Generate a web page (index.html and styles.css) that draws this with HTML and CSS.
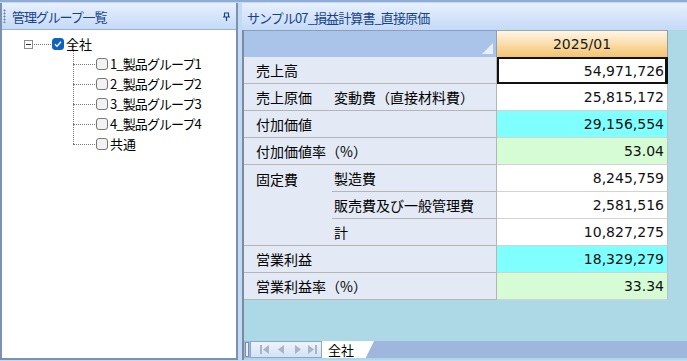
FILE: index.html
```html
<!DOCTYPE html>
<html lang="ja">
<head>
<meta charset="utf-8">
<link rel="stylesheet" href="styles.css">
</head>
<body>
<div class="app">
  <div class="left">
    <div class="ptitle">
      <span class="grip"></span>
      <span class="ttext">管理グループ一覧</span>
      <svg class="pin" width="9" height="9" viewBox="0 0 9 9"><path d="M2 1h5M2.5 1v4M6.5 1v4M1 5h7M4.5 5v4" stroke="#15428b" stroke-width="1.2" fill="none"/></svg>
    </div>
    <div class="tree">
      <div class="node root">
        <span class="expander"><svg width="9" height="9" viewBox="0 0 9 9"><rect x="0.5" y="0.5" width="8" height="8" fill="#fff" stroke="#8c8c8c"/><path d="M2 4.5h5" stroke="#333"/></svg></span>
        <span class="hdots"></span>
        <span class="cb checked"><svg width="10" height="10" viewBox="0 0 10 10"><path d="M2 5.2l2 2 4-4.4" stroke="#fff" stroke-width="1.3" fill="none"/></svg></span>
        <span class="label">全社</span>
      </div>
      <div class="children">
        <div class="node child"><span class="hline"></span><span class="cb"></span><span class="label tight">1_製品グループ1</span></div>
        <div class="node child"><span class="hline"></span><span class="cb"></span><span class="label tight">2_製品グループ2</span></div>
        <div class="node child"><span class="hline"></span><span class="cb"></span><span class="label tight">3_製品グループ3</span></div>
        <div class="node child"><span class="hline"></span><span class="cb"></span><span class="label tight">4_製品グループ4</span></div>
        <div class="node child last"><span class="hline"></span><span class="cb"></span><span class="label">共通</span></div>
      </div>
    </div>
  </div>
  <div class="right">
    <div class="rtitle">サンプル07_損益計算書_直接原価</div>
    <div class="sheet">
      <div class="gridarea">
        <div class="grid">
          <div class="corner"><span class="tri"></span></div>
          <div class="colhead">2025/01</div>

          <div class="lab c1 span2">売上高</div>
          <div class="val sel">54,971,726</div>

          <div class="lab c1">売上原価</div>
          <div class="lab c2">変動費（直接材料費）</div>
          <div class="val">25,815,172</div>

          <div class="lab c1 span2">付加価値</div>
          <div class="val cyan">29,156,554</div>

          <div class="lab c1 span2">付加価値率（%）</div>
          <div class="val green">53.04</div>

          <div class="lab c1 tall">固定費</div>
          <div class="lab c2">製造費</div>
          <div class="val">8,245,759</div>
          <div class="lab c2">販売費及び一般管理費</div>
          <div class="val">2,581,516</div>
          <div class="lab c2">計</div>
          <div class="val">10,827,275</div>

          <div class="lab c1 span2">営業利益</div>
          <div class="val cyan">18,329,279</div>

          <div class="lab c1 span2">営業利益率（%）</div>
          <div class="val green">33.34</div>
        </div>
      </div>
      <div class="tabbar">
        <span class="handle"></span>
        <div class="nav">
          <svg width="72" height="15" viewBox="0 0 72 15">
            <g fill="#a9b4c4">
              <rect x="9" y="3" width="2" height="9"/><path d="M18 3v9l-6-4.5z"/>
              <path d="M33 3v9l-6-4.5z"/>
              <path d="M44 3v9l6-4.5z"/>
              <path d="M57 3v9l6-4.5z"/><rect x="64" y="3" width="2" height="9"/>
            </g>
          </svg>
        </div>
        <div class="tab">全社</div>
        <div class="tabrest"></div>
      </div>
    </div>
  </div>
</div>
</body>
</html>
```
FILE: styles.css
```css
html, body {
  margin: 0;
  padding: 0;
}
body {
  width: 687px;
  height: 361px;
  overflow: hidden;
  background: #c3daf5;
  font-family: "Noto Sans CJK JP", "Noto Sans", sans-serif;
  color: #000;
}
.app {
  display: flex;
  height: 361px;
  box-sizing: border-box;
  border-top: 2px solid #8fabd6;
  padding-top: 1px;
  padding-bottom: 1px;
}
.left {
  width: 238px;
  box-sizing: border-box;
  border: 2px solid #7d90ae;
  border-top: none;
  background: #fff;
  display: flex;
  flex-direction: column;
}
.ptitle {
  height: 27px;
  box-sizing: border-box;
  display: flex;
  align-items: center;
  background: linear-gradient(#e7f0fd, #c5daf7);
  border-bottom: 1px solid #9bb2d3;
  padding-left: 1px;
  padding-right: 5px;
}
.grip {
  width: 3px;
  height: 14px;
  background-image: radial-gradient(circle, #5b7fb7 0.8px, transparent 1.2px);
  background-size: 3px 3px;
  margin-right: 6px;
}
.ttext {
  font-size: 13px;
  color: #15428b;
  flex: 1;
  letter-spacing: -1.1px;
}
.pin { display: block; }
.tree {
  padding-top: 4px;
  font-size: 13px;
}
.node {
  display: flex;
  align-items: center;
  height: 20px;
}
.root { padding-left: 22px; }
.expander { width: 9px; height: 9px; display: block; }
.expander svg { display: block; }
.hdots {
  width: 17px;
  border-top: 1px dotted #777;
  margin: 0 1px;
}
.cb {
  width: 12px;
  height: 12px;
  box-sizing: border-box;
  border: 1px solid #777;
  border-radius: 3px;
  background: #f2f2f2;
  display: flex;
  align-items: center;
  justify-content: center;
  margin-right: 2px;
}
.cb.checked {
  background: #0f62bf;
  border-color: #0f62bf;
}
.cb svg { display: block; }
.label { line-height: 20px; }
.label.tight { letter-spacing: -0.9px; }
.children {
  margin-left: 71px;
  position: relative;
}
.children::before {
  content: "";
  position: absolute;
  left: 0;
  top: -10px;
  height: 100px;
  border-left: 1px dotted #777;
}
.child .hline {
  width: 22px;
  border-top: 1px dotted #777;
  margin-right: 1px;
}
.right {
  flex: 1;
  margin-left: 4px;
  display: flex;
  flex-direction: column;
}
.rtitle {
  height: 27px;
  box-sizing: border-box;
  padding: 5px 0 0 5px;
  font-size: 13px;
  color: #15428b;
  background: linear-gradient(#e7f0fd, #c5daf7);
  letter-spacing: -0.9px;
}
.sheet {
  flex: 1;
  display: flex;
  flex-direction: column;
  border-left: 2px solid #7c8aa0;
  background: #add8e6;
}
.gridarea { flex: 1; }
.grid {
  display: grid;
  grid-template-columns: 88px 165px 171px;
  grid-auto-rows: 27px;
  width: 424px;
}
.corner {
  grid-column: 1 / 3;
  background: #a9c4e8;
  border-top: 1px solid #8d9fb8;
  border-right: 1px solid #8d9fb8;
  box-sizing: border-box;
  position: relative;
}
.tri {
  position: absolute;
  right: 3px;
  bottom: 3px;
  width: 0;
  height: 0;
  border-left: 11px solid transparent;
  border-bottom: 11px solid #e8effa;
}
.colhead {
  background: linear-gradient(#fff6e6, #f4c470);
  border-top: 1px solid #9aa;
  border-right: 1px solid #999;
  box-sizing: border-box;
  font-family: "DejaVu Sans", sans-serif;
  font-size: 14px;
  display: flex;
  align-items: center;
  justify-content: center;
  color: #1a1a1a;
}
.lab {
  background: #e3eaf5;
  font-size: 14px;
  display: flex;
  align-items: center;
  box-sizing: border-box;
  border-bottom: 1px solid #b5b5b5;
}
.c1 { padding-left: 12px; }
.c2 { padding-left: 2px; }
.span2 { grid-column: 1 / 3; }
.tall { grid-row: span 3; align-items: flex-start; padding-top: 4px; }
.lab.c2 { border-right: 1px solid #b5b5b5; }
.lab.span2 { border-right: 1px solid #b5b5b5; }
.val {
  background: #fff;
  font-family: "DejaVu Sans", sans-serif;
  font-size: 14px;
  display: flex;
  align-items: center;
  justify-content: flex-end;
  padding-right: 3px;
  box-sizing: border-box;
  border-bottom: 1px solid #d2d2d2;
  border-right: 1px solid #c0c0c0;
  color: #111;
}
.val.cyan { background: #80ffff; }
.val.green { background: #d5fcd5; }
.val.sel {
  border: 2px solid #111;
  border-right-width: 3px;
  padding-right: 1px;
}
.tabbar {
  height: 17px;
  display: flex;
  align-items: stretch;
  background: #9fb7dd;
  margin-bottom: 2px;
}
.handle {
  width: 2px;
  background: #e8f0fb;
  border: 1px solid #7d8fad;
  margin: 1px 1px;
}
.nav {
  width: 72px;
  background: linear-gradient(#eef4fc, #d3e2f5);
  border: 1px solid #8fa6c8;
  box-sizing: border-box;
}
.nav svg { display: block; margin-top: 0; }
.tab {
  width: 52px;
  background: #fff;
  font-size: 13px;
  line-height: 17px;
  padding-left: 6px;
  box-sizing: border-box;
  clip-path: polygon(0 0, 100% 0, 84% 100%, 0 100%);
}
.tabrest { flex: 1; }
```
